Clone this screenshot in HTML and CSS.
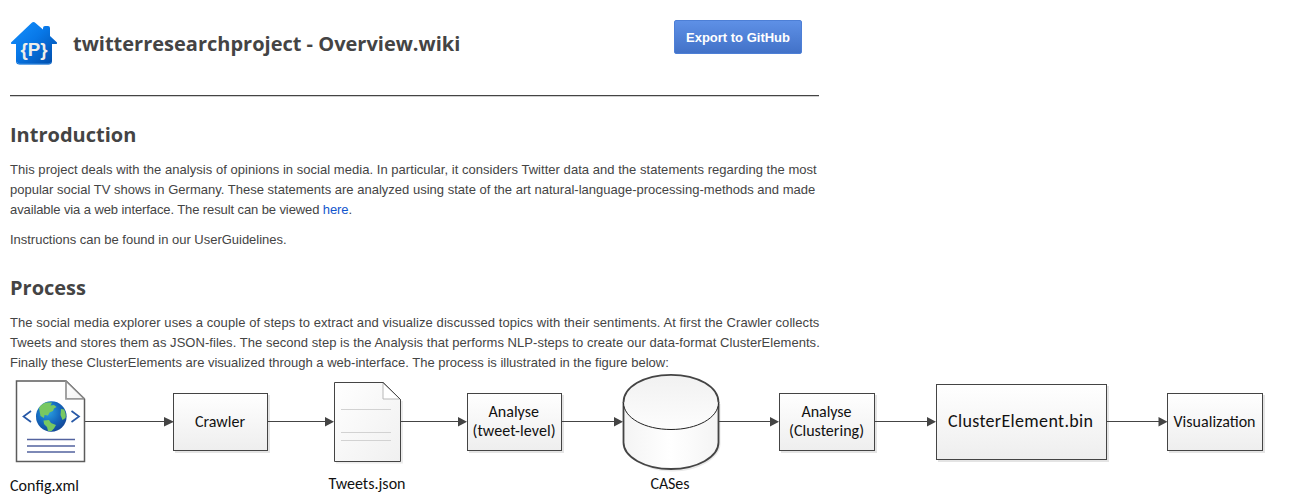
FILE: index.html
```html
<!DOCTYPE html>
<html lang="en">
<head>
<meta charset="utf-8">
<title>twitterresearchproject - Overview.wiki</title>
<link rel="stylesheet" href="styles.css">
</head>
<body>
<header class="header">
  <svg class="logo" viewBox="10 20 48 48" width="48" height="48">
    <defs>
      <linearGradient id="roof" x1="0" y1="0" x2="1" y2="1"><stop offset="0" stop-color="#1592ff"/><stop offset=".45" stop-color="#0878e8"/><stop offset="1" stop-color="#0049a5"/></linearGradient>
    </defs>
    <path d="M31.500 23Q33.500 21.200 35.500 23L43 29.500V28Q43 26 45 26H48Q50 26 50 28V36L57 42.500Q57.500 44 56 44H52V61Q52 64.500 48.500 64.500H19.500Q16 64.500 16 61V44H12Q10.500 44 11 42.500Z" fill="url(#roof)"/>
    <path d="M17 62Q18 64 20 64H48Q51 64 51.500 62" fill="none" stroke="#4197e8" stroke-width=".8"/>
    <text x="34" y="55.500" text-anchor="middle" textLength="27" lengthAdjust="spacingAndGlyphs" class="logo-text">{P}</text>
  </svg>
  <h1 class="title">twitterresearchproject - Overview.wiki</h1>
  <a class="export">Export to GitHub</a>
</header>
<main class="content">
  <h2 class="heading">Introduction</h2>
  <p class="para"><span class="line l1">This project deals with the analysis of opinions in social media. In particular, it considers Twitter data and the statements regarding the most</span>
  <span class="line l2">popular social TV shows in Germany. These statements are analyzed using state of the art natural-language-processing-methods and made</span>
  <span class="line l3">available via a web interface. The result can be viewed <a class="link">here</a>.</span></p>
  <p class="para"><span class="line l4">Instructions can be found in our UserGuidelines.</span></p>
  <h2 class="heading process">Process</h2>
  <p class="para"><span class="line l5">The social media explorer uses a couple of steps to extract and visualize discussed topics with their sentiments. At first the Crawler collects</span>
  <span class="line l6">Tweets and stores them as JSON-files. The second step is the Analysis that performs NLP-steps to create our data-format ClusterElements.</span>
  <span class="line l7">Finally these ClusterElements are visualized through a web-interface. The process is illustrated in the figure below:</span></p>
</main>
<svg class="diagram" viewBox="0 373 1295 127" width="1295" height="127">
  <defs>
    <linearGradient id="box" x1="0" y1="0" x2="0" y2="1"><stop offset="0" stop-color="#fff"/><stop offset="1" stop-color="#eee"/></linearGradient>
    <linearGradient id="sheet" x1="0" y1="0" x2="1" y2="1"><stop offset="0" stop-color="#fff"/><stop offset="1" stop-color="#f0f0f0"/></linearGradient>
    <linearGradient id="side" x1="0" y1="0" x2="1" y2="0"><stop offset="0" stop-color="#f4f4f4"/><stop offset=".5" stop-color="#fff"/><stop offset="1" stop-color="#f4f4f4"/></linearGradient>
    <linearGradient id="lid" x1="0" y1="0" x2="0" y2="1"><stop offset="0" stop-color="#f1f1f1"/><stop offset="1" stop-color="#fdfdfd"/></linearGradient>
    <radialGradient id="sea" cx=".4" cy=".35" r=".65"><stop offset="0" stop-color="#2aa2e4"/><stop offset=".6" stop-color="#1468bd"/><stop offset="1" stop-color="#134a9a"/></radialGradient>
    <linearGradient id="fold" x1="0" y1="0" x2="1" y2="1"><stop offset="0" stop-color="#fff"/><stop offset="1" stop-color="#f2f2f2"/></linearGradient>
  </defs>

  <g class="shadow">
    <rect x="175" y="395" width="95" height="58"/>
    <rect x="469" y="395" width="95" height="58"/>
    <rect x="781" y="395" width="96" height="58"/>
    <rect x="938" y="386" width="171" height="76"/>
    <rect x="1169" y="395" width="96" height="58"/>
  </g>
  <path d="M336 462.500H402V401" fill="none" stroke="#ececec" stroke-width="2"/>
  <path d="M625.500 404V444C625.500 458 646 471.500 672.500 471.500S720.500 458 720.500 444V404" fill="#e9e9e9"/>

  <path class="wire" d="M85 421.500H165M268 421.500H326M401 421.500H459M562 421.500H615M719 421.500H771M875 421.500H928M1107 421.500H1160"/>
  <path class="head" d="M164 417l10 4.700-10 4.700zM325 417l9 4.700-9 4.700zM458 417l9 4.700-9 4.700zM614 417l9 4.700-9 4.700zM770 417l9 4.700-9 4.700zM927 417l9 4.700-9 4.700zM1158.500 417l9 4.700-9 4.700z"/>

  <path d="M16.500 381H66L84.500 399V461.500H16.500Z" fill="#fff" stroke="#5c5c5c" stroke-width="1.500"/>
  <path d="M66 381V398.800H84" fill="url(#fold)" stroke="#999" stroke-width="1.800"/>
  <path d="M66 381L84.500 399" stroke="#888" stroke-width="1.600"/>
  <circle cx="51.300" cy="416.500" r="15.300" fill="url(#sea)"/>
  <g fill="#78c862">
    <path d="M39 408Q41 404 46 402.500L52 402.500 50.500 405.500 54 405 56.500 407 54 408.500 53 411 49.500 412.500 48 415.500 44.500 415 44 418 40.500 416Z"/>
    <path d="M43.500 420.500L49 420 51 423 56 425 54 428.500 51.500 431H48L47 427 44 424Z"/>
    <path d="M61 409L64 409.500Q66.500 414 65.500 418L62.500 420 60.500 415Z"/>
  </g>
  <path d="M31 411L23.500 416.500 31 422M71.500 411L79 416.500 71.500 422" fill="none" stroke="#2859a7" stroke-width="1.700"/>
  <path d="M27 439.600H75M27 446H75M27 452H75" stroke="#53639f" stroke-width="1.500"/>

  <path d="M334.500 382.500H383L400.500 399.500V461.500H334.500Z" fill="url(#sheet)" stroke="#444"/>
  <path d="M383 383V399H400" fill="#fff" stroke="#b8b8b8"/>
  <path d="M383 382.500L400.500 399.500" stroke="#444"/>
  <path d="M341 409.500H391M341 432.500H391M341 440.500H391" stroke="#d2d2d2"/>

  <g class="box">
    <rect x="173.500" y="393.500" width="94" height="57"/>
    <rect x="467.500" y="393.500" width="94" height="57"/>
    <rect x="779.500" y="393.500" width="95" height="57"/>
    <rect x="936.500" y="384.500" width="170" height="75"/>
    <rect x="1167.500" y="393.500" width="95" height="57"/>
  </g>

  <path d="M623.500 402V442.500C623.500 457 645 469 671 469S718.500 457 718.500 442.500V402" fill="url(#side)" stroke="#444" stroke-width="1.800"/>
  <path d="M623.500 402.500C623.500 387 644 374.800 671 374.800S718.500 387 718.500 402.500 697 429.500 671 429.500 623.500 418 623.500 402.500" fill="url(#lid)"/>
  <path d="M623.500 402.500C623.500 387 644 374.800 671 374.800S718.500 387 718.500 402.500" fill="none" stroke="#444" stroke-width="1.800"/>
  <path d="M623.500 402.500C623.500 418 645 429.500 671 429.500S718.500 418 718.500 402.500" fill="none" stroke="#222"/>

  <g class="label">
    <text x="10" y="491" textLength="69">Config.xml</text>
    <text x="195" y="427" textLength="50">Crawler</text>
    <text x="328.500" y="489" textLength="77">Tweets.json</text>
    <text x="488.500" y="417" textLength="50.500">Analyse</text>
    <text x="472.500" y="436" textLength="83">(tweet-level)</text>
    <text x="650.500" y="489" textLength="39">CASes</text>
    <text x="801.500" y="417" textLength="50">Analyse</text>
    <text x="789" y="436" textLength="75">(Clustering)</text>
    <text x="948" y="427" textLength="145" class="large">ClusterElement.bin</text>
    <text x="1173.500" y="427" textLength="82">Visualization</text>
  </g>
</svg>
</body>
</html>
```

FILE: styles.css
```css
body {
  margin: 0;
  background: #fff;
  color: #444;
  font: 13px/20px "Liberation Sans", Arial, sans-serif;
}
.header {
  box-sizing: border-box;
  display: flex;
  align-items: flex-start;
  width: 809px;
  height: 97px;
  margin-left: 10px;
  padding-top: 20px;
  border-bottom: 1px solid #d0d0d0;
  box-shadow: inset 0 -1px #444;
}
.logo { flex: none; }
.logo-text {
  font: bold 19px "Liberation Sans", Arial, sans-serif;
  fill: #eeeeea;
}
.title {
  width: 601px;
  margin: 9px 0 0 15px;
  font: bold 20px/30px "Open Sans", sans-serif;
  white-space: nowrap;
}
.export {
  flex: none;
  box-sizing: border-box;
  width: 128px;
  height: 34px;
  margin-right: 17px;
  border: 1px solid #4d7fd6;
  border-radius: 2px;
  background: linear-gradient(#5e90e6, #4272c8);
  color: #fff;
  font-weight: bold;
  line-height: 33px;
  text-align: center;
  white-space: nowrap;
}
.content {
  width: 820px;
  padding: 23px 0 0 10px;
}
.heading {
  margin: 0 0 10px;
  font: bold 20px/30px "Open Sans", sans-serif;
}
.process { margin-top: 23px; }
.para { margin: 0 0 10px; }
.para:last-child { margin: 0; }
.line {
  display: block;
  width: max-content;
  white-space: nowrap;
}
.l1 { letter-spacing: 0.039px; }
.l2 { letter-spacing: 0.007px; }
.l3 { letter-spacing: -0.1px; }
.l4 { letter-spacing: -0.02px; }
.l5 { letter-spacing: 0.072px; }
.l6 { letter-spacing: 0.043px; }
.link { color: #15c; }
.diagram { display: block; }
.shadow { fill: #e4e4e4; }
.wire { fill: none; stroke: #444; }
.head { fill: #444; }
.box { fill: url(#box); stroke: #444; }
.label {
  fill: #111;
  font: 16px Carlito, "Open Sans", sans-serif;
}
.large { font-size: 18px; }
```
